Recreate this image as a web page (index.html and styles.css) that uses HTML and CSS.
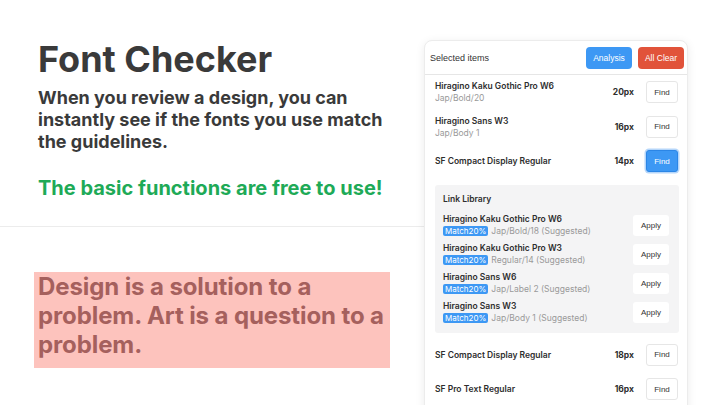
FILE: index.html
```html
<!DOCTYPE html>
<html>
<head>
<meta charset="utf-8">
<link rel="stylesheet" href="styles.css">
</head>
<body>
<div class="page">
  <section class="intro">
    <div class="top">
      <h1 class="title">Font Checker</h1>
      <p class="lead">When you review a design, you can instantly see if the fonts you use match the guidelines.</p>
      <p class="free">The basic functions are free to use!</p>
    </div>
    <div class="quote">Design is a solution to a problem. Art is a question to a problem.</div>
  </section>

  <aside class="panel">
    <div class="panel-head">
      <span class="head-label">Selected items</span>
      <div class="head-actions">
        <button class="btn btn-blue">Analysis</button>
        <button class="btn btn-red">All Clear</button>
      </div>
    </div>

    <div class="row">
      <div class="font-info">
        <div class="font-name">Hiragino Kaku Gothic Pro W6</div>
        <div class="font-style">Jap/Bold/20</div>
      </div>
      <span class="size">20px</span>
      <button class="find">Find</button>
    </div>
    <div class="row">
      <div class="font-info">
        <div class="font-name">Hiragino Sans W3</div>
        <div class="font-style">Jap/Body 1</div>
      </div>
      <span class="size">16px</span>
      <button class="find">Find</button>
    </div>
    <div class="row">
      <div class="font-info">
        <div class="font-name">SF Compact Display Regular</div>
      </div>
      <span class="size">14px</span>
      <button class="find find-active">Find</button>
    </div>

    <div class="library">
      <div class="lib-title">Link Library</div>
      <div class="lib-item">
        <div class="lib-info">
          <div class="font-name">Hiragino Kaku Gothic Pro W6</div>
          <div class="lib-meta"><span class="badge">Match20%</span><span class="font-style">Jap/Bold/18 (Suggested)</span></div>
        </div>
        <button class="apply">Apply</button>
      </div>
      <div class="lib-item">
        <div class="lib-info">
          <div class="font-name">Hiragino Kaku Gothic Pro W3</div>
          <div class="lib-meta"><span class="badge">Match20%</span><span class="font-style">Regular/14 (Suggested)</span></div>
        </div>
        <button class="apply">Apply</button>
      </div>
      <div class="lib-item">
        <div class="lib-info">
          <div class="font-name">Hiragino Sans W6</div>
          <div class="lib-meta"><span class="badge">Match20%</span><span class="font-style">Jap/Label 2 (Suggested)</span></div>
        </div>
        <button class="apply">Apply</button>
      </div>
      <div class="lib-item">
        <div class="lib-info">
          <div class="font-name">Hiragino Sans W3</div>
          <div class="lib-meta"><span class="badge">Match20%</span><span class="font-style">Jap/Body 1 (Suggested)</span></div>
        </div>
        <button class="apply">Apply</button>
      </div>
    </div>

    <div class="row">
      <div class="font-info">
        <div class="font-name">SF Compact Display Regular</div>
      </div>
      <span class="size">18px</span>
      <button class="find">Find</button>
    </div>
    <div class="row">
      <div class="font-info">
        <div class="font-name">SF Pro Text Regular</div>
      </div>
      <span class="size">16px</span>
      <button class="find">Find</button>
    </div>
  </aside>
</div>
</body>
</html>
```

FILE: styles.css
```css
* { box-sizing: border-box; }
html, body {
  margin: 0;
  padding: 0;
  background: #ffffff;
  width: 720px;
  height: 405px;
  overflow: hidden;
}
body {
  font-family: Inter, "Noto Sans", sans-serif;
  color: #3a3a3a;
}
.page {
  display: flex;
  align-items: flex-start;
  width: 720px;
  height: 405px;
}
.intro {
  width: 424px;
  flex: none;
}
.top {
  padding: 37px 0 26px 38px;
  border-bottom: 1px solid #ececec;
}
.title {
  margin: 0;
  font-size: 36px;
  line-height: 44px;
  font-weight: 700;
  color: #3a3a3a;
}
.lead {
  margin: 5.5px 0 0;
  width: 360px;
  font-size: 18px;
  line-height: 22px;
  font-weight: 700;
  color: #3a3a3a;
}
.free {
  margin: 23.5px 0 0;
  font-size: 20px;
  line-height: 24px;
  font-weight: 700;
  color: #1eaa57;
}
.quote {
  margin: 45px 0 0 34px;
  width: 356px;
  padding: 0 0 9px 4px;
  background: #fdc3bd;
  color: #a5605d;
  font-size: 24px;
  line-height: 29px;
  font-weight: 700;
  letter-spacing: -0.1px;
}

.panel {
  flex: none;
  width: 264px;
  margin-top: 40px;
  height: 420px;
  background: #fff;
  border: 1px solid #ececec;
  border-radius: 8px;
  box-shadow: 0 2px 10px rgba(0, 0, 0, 0.08);
}
.panel-head {
  display: flex;
  align-items: center;
  justify-content: space-between;
  height: 34px;
  padding: 0 3px 0 5px;
  border-bottom: 1px solid #e6e6e6;
}
.head-label {
  font-family: "Liberation Sans", Arial, sans-serif;
  font-size: 9px;
  color: #333;
}
.head-actions {
  display: flex;
  gap: 6px;
}
.btn {
  width: 46px;
  height: 22px;
  border: none;
  border-radius: 4px;
  font-family: "Liberation Sans", Arial, sans-serif;
  font-size: 8.5px;
  color: #fff;
  padding: 0;
}
.btn-blue { background: #3d98f4; }
.btn-red { background: #e1533a; }

.row {
  display: flex;
  align-items: center;
  height: 34.5px;
  padding: 0 9px 0 10px;
}
.font-info {
  flex: 1;
}
.font-name {
  font-size: 8.5px;
  line-height: 12px;
  font-weight: 600;
  color: #2e2e2e;
}
.font-style {
  font-size: 8.5px;
  line-height: 12px;
  color: #9a9a9a;
}
.size {
  font-size: 8.5px;
  font-weight: 700;
  color: #2e2e2e;
  margin-right: 12px;
}
.find {
  width: 32px;
  height: 22px;
  padding: 0;
  background: #fff;
  border: 1px solid #e6e6e6;
  border-radius: 3px;
  font-family: "Liberation Sans", Arial, sans-serif;
  font-size: 8px;
  color: #333;
}
.find-active {
  background: #3d98f4;
  color: #fff;
  border: 1px solid #2c86e6;
  box-shadow: 0 0 0 1.5px #b5d6fa;
}

.library {
  margin: 6px 8px 5px 10px;
  background: #f4f4f5;
  border-radius: 3px;
  padding: 8.5px 10px 6px 8px;
}
.lib-title {
  font-size: 8.5px;
  line-height: 12px;
  font-weight: 600;
  color: #2e2e2e;
  margin-bottom: 5.5px;
}
.lib-item {
  display: flex;
  align-items: center;
  height: 29px;
}
.lib-info { flex: 1; }
.lib-meta {
  display: flex;
  align-items: center;
  gap: 3px;
  height: 12px;
}
.badge {
  background: #3d98f4;
  color: #fff;
  font-size: 8px;
  line-height: 10px;
  padding: 0 2px;
  border-radius: 2px;
}
.apply {
  width: 36px;
  height: 21px;
  padding: 0;
  background: #fff;
  border: none;
  border-radius: 3px;
  font-family: "Liberation Sans", Arial, sans-serif;
  font-size: 8px;
  color: #333;
}
```
